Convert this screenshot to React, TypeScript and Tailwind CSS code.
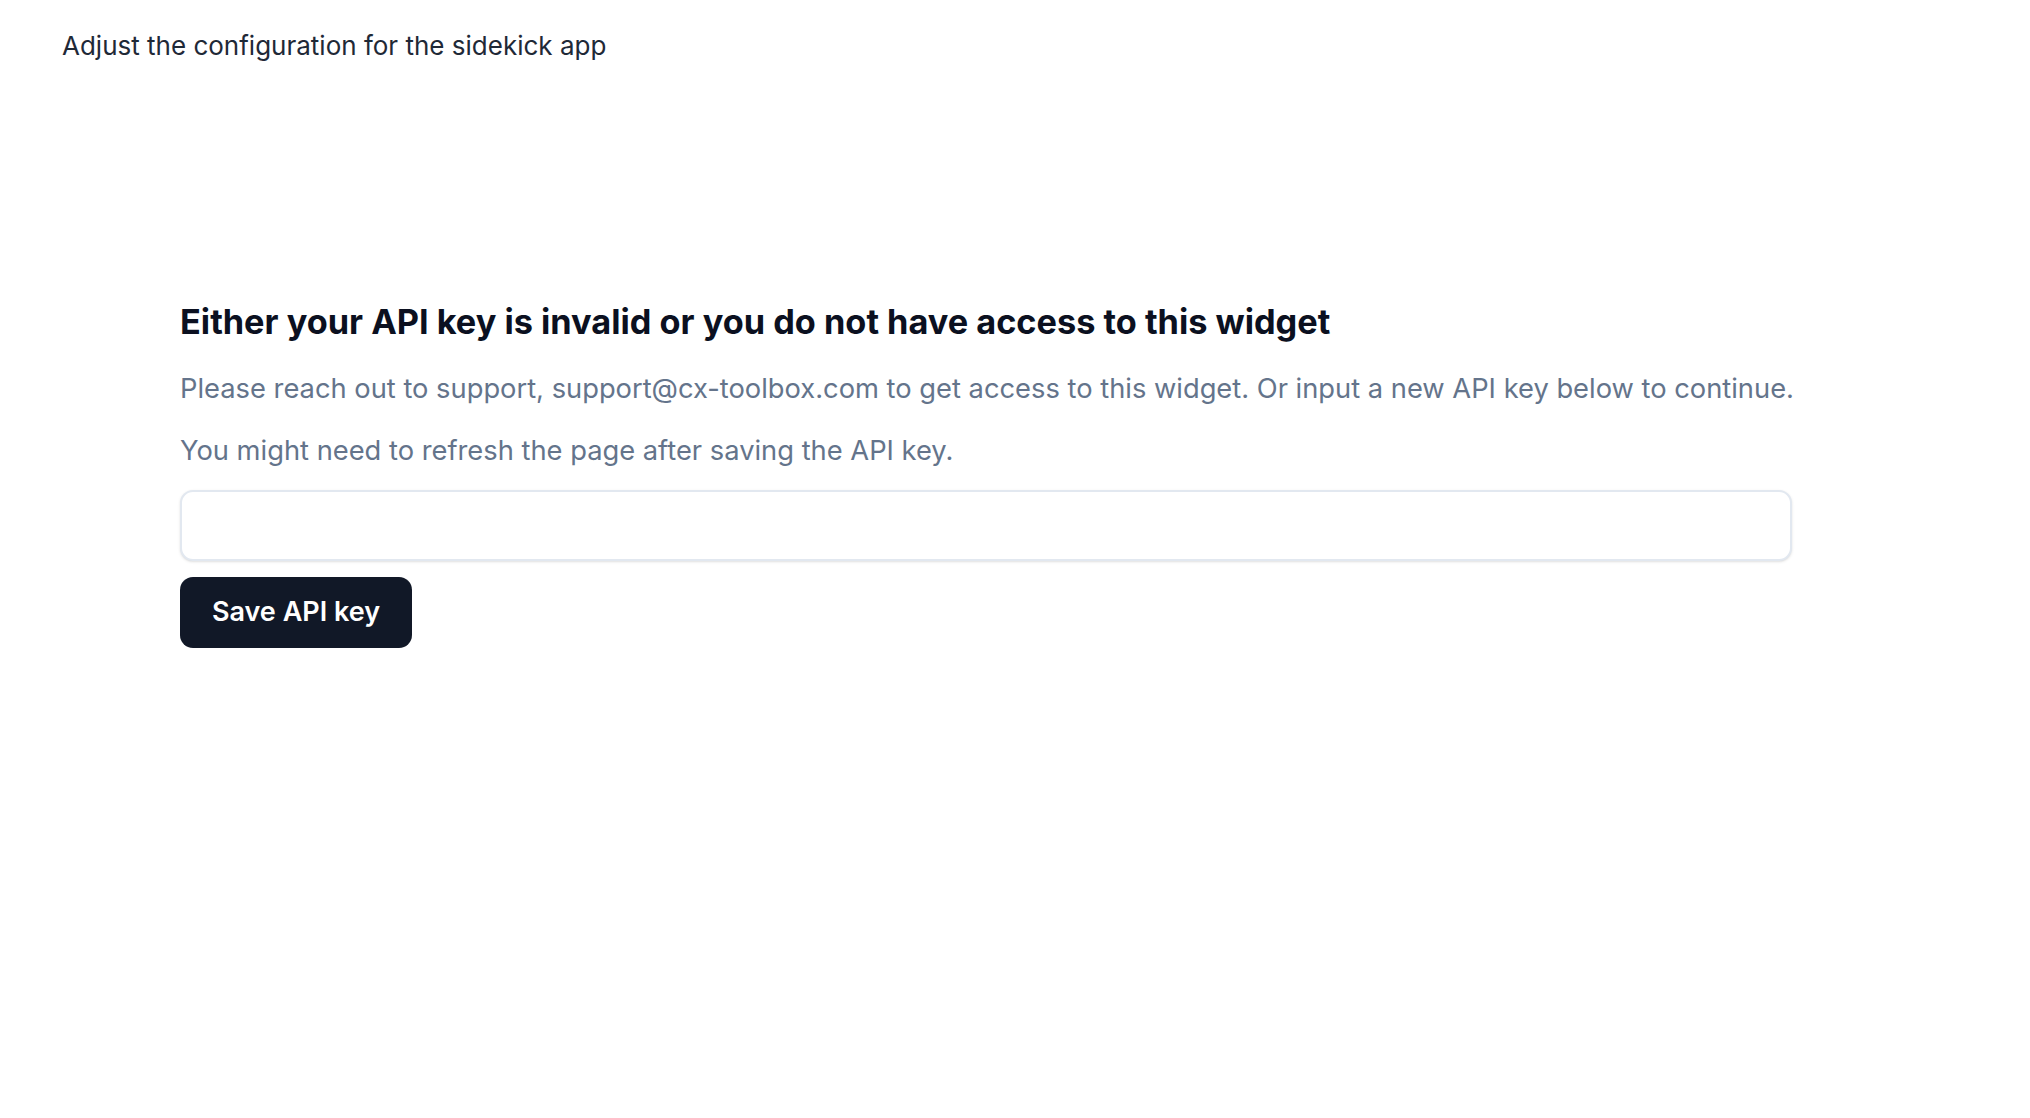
import React from "react";

export default function App() {
  return (
    <div
      className="min-h-[1118px] w-full bg-white"
      style={{ fontFamily: "Inter, 'Noto Sans', sans-serif" }}
    >
      <div className="pl-[62px] pt-[28px]">
        <p className="text-[26px] leading-[36px] text-[#1f2937]">
          Adjust the configuration for the sidekick app
        </p>
      </div>
      <div className="ml-[180px] mt-[238px] w-[1612px] flex flex-col">
        <h2 className="text-[34.3px] leading-[40px] font-bold text-[#0b1020] whitespace-nowrap">
          Either your API key is invalid or you do not have access to this widget
        </h2>
        <p className="mt-[28px] text-[27.3px] leading-[38px] text-[#64748b] whitespace-nowrap">
          Please reach out to support, support@cx-toolbox.com to get access to this widget. Or input a new API key below to continue.
        </p>
        <p className="mt-[24px] text-[27.3px] leading-[38px] text-[#64748b] whitespace-nowrap">
          You might need to refresh the page after saving the API key.
        </p>
        <input
          type="text"
          className="mt-[20px] h-[71px] w-full rounded-[13px] border-2 border-[#e2e8f0] bg-white px-4 outline-none shadow-sm"
        />
        <div className="mt-[16px]">
          <button className="h-[71px] w-[232px] rounded-[13px] bg-[#111827] text-[27px] font-semibold text-white">
            Save API key
          </button>
        </div>
      </div>
    </div>
  );
}
